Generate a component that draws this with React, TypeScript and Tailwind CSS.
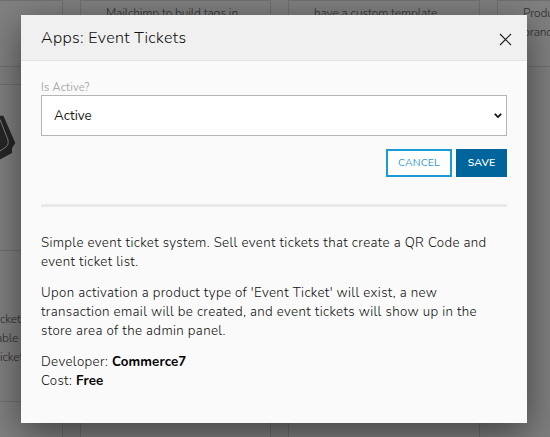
import type { ReactNode } from "react";

function Line({ className = "", children }: { className?: string; children: ReactNode }) {
  return <div className={`whitespace-nowrap ${className}`}>{children}</div>;
}

function TicketIcon() {
  return (
    <svg className="absolute left-0 top-[30px]" width="16" height="60" viewBox="0 0 16 60">
      <path d="M0 0.7L3.4 0.7L15.3 28L12 33L12 38L0 44.5Z" fill="#262626" />
      <path d="M0 4.5L8 25Q9.2 29.5 6 32L0 36" fill="none" stroke="#808080" strokeWidth="1" />
    </svg>
  );
}

const card = "border border-[#707070] bg-[#818181]";

function Backdrop() {
  return (
    <div className="-ml-[129px] grid w-[827px] grid-cols-[192px_191px_192px_191px] grid-rows-[67px_335px_60px] gap-x-[17px] text-[12px] font-light leading-[19px] tracking-[-0.15px] text-[#2e2e2e]">
      <div className={card} />
      <div className={`${card} pl-[25px] pt-[3px]`}>
        <Line>Mailchimp to build tags in</Line>
      </div>
      <div className={`${card} pl-[25px] pt-[3px]`}>
        <Line>have a custom template</Line>
      </div>
      <div className={`${card} pl-[25px] pt-[3px]`}>
        <Line>Produ</Line>
        <Line>brand</Line>
      </div>
      <div className={`${card} mt-[17px] pl-[128px]`}>
        <div className="relative -ml-[128px] h-[166px] border-b border-[#707070] pl-[128px]">
          <div className="relative">
            <TicketIcon />
          </div>
        </div>
        <div className="pt-[59px]">
          <Line>cket</Line>
          <Line className="-ml-1">able</Line>
          <Line>icket</Line>
        </div>
      </div>
      <div className={`${card} mt-[17px]`} />
      <div className={`${card} mt-[17px]`} />
      <div />
      <div className={`${card} border-t-0`} />
      <div className={`${card} border-t-0`} />
      <div className={`${card} border-t-0`} />
    </div>
  );
}

function Modal() {
  return (
    <div className="absolute left-[21px] top-[15px] flex h-[408px] w-[506px] flex-col bg-[#fafafa] shadow-[0_10px_35px_rgba(0,0,0,0.5)]">
      <div className="flex h-[46px] items-center justify-between border-b border-[#e4e4e4] bg-[#f0f0f0] pl-5 pr-[15px]">
        <h1 className="text-[16px] font-light leading-5 tracking-[0.36px] text-[#111]">Apps: Event Tickets</h1>
        <svg className="mt-[3px]" width="13" height="13" viewBox="0 0 13 13" fill="none" stroke="#222" strokeWidth="1.2">
          <path d="M1 1L12 12M12 1L1 12" />
        </svg>
      </div>
      <div className="flex flex-col px-5 pt-[19px]">
        <label className="h-[15px] text-[11px] leading-[15px] tracking-[0.2px] text-[#aaa]">Is Active?</label>
        <div className="flex h-[41px] items-center justify-between border border-[#b5b5b5] bg-white pl-3 pr-1">
          <span className="text-[13.4px] leading-5 text-[#1a1a1a]">Active</span>
          <svg className="mt-px" width="8" height="6" viewBox="0 0 8 6" fill="none" stroke="#111" strokeWidth="1.8">
            <path d="M0.8 0.9L4 4.1L7.2 0.9" />
          </svg>
        </div>
        <div className="mt-[13px] flex justify-end gap-1">
          <button className="h-7 w-[66px] border-2 border-[#1b9ad6] bg-white text-[10.5px] tracking-[0.1px] text-[#3399cc]">CANCEL</button>
          <button className="h-7 w-[51px] bg-[#00659b] text-[10.5px] font-semibold tracking-[0.1px] text-white">SAVE</button>
        </div>
        <div className="mt-[27px] h-[3px] bg-[#e9e9e9]" />
        <div className="mt-[27px] text-[13.3px] font-light leading-[19px] tracking-[0.36px] text-[#111]">
          <Line>Simple event ticket system. Sell event tickets that create a QR Code and</Line>
          <Line>event ticket list.</Line>
          <Line className="mt-3">Upon activation a product type of 'Event Ticket' will exist, a new</Line>
          <Line>transaction email will be created, and event tickets will show up in the</Line>
          <Line>store area of the admin panel.</Line>
          <Line className="mt-3">Developer: <b className="font-bold tracking-[0.15px] text-black">Commerce7</b></Line>
          <Line>Cost: <b className="font-bold tracking-[0.15px] text-black">Free</b></Line>
        </div>
      </div>
    </div>
  );
}

export default function App() {
  return (
    <div className="relative h-[437px] w-[550px] overflow-hidden bg-[#7f7f7f] font-['Nunito','Lato',sans-serif]">
      <Backdrop />
      <Modal />
    </div>
  );
}
